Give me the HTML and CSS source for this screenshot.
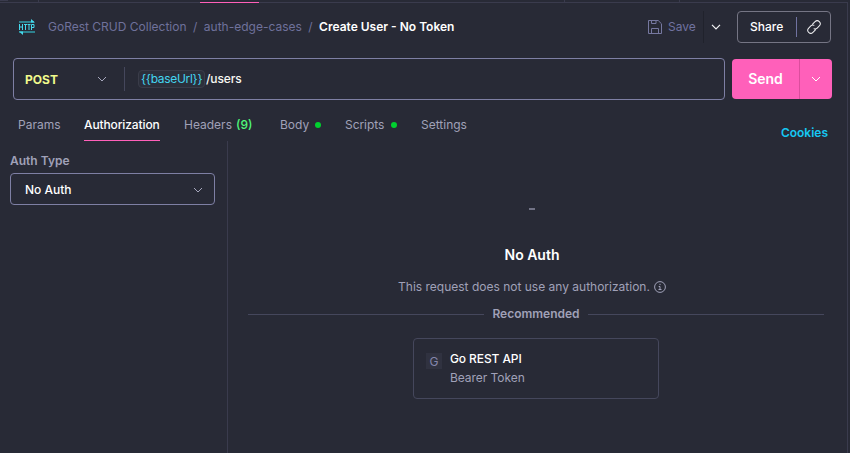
FILE: index.html
```html
<!DOCTYPE html>
<html lang="en">
<head>
<meta charset="utf-8">
<title>Create User - No Token</title>
<link rel="stylesheet" href="styles.css">
</head>
<body>
<div class="app">
  <div class="tabstrip"><i class="edge first"></i><i class="edge second"></i><i class="active"></i><i class="edge third"></i><i class="edge fourth"></i></div>
  <main class="main">
    <header class="header">
      <svg class="http" width="18" height="16" viewBox="0 0 18 16"><path d="M1 3h15M1 13h16" stroke="#2e818e" stroke-width="2"/><path d="M13 0l4 3.500h-4zM5 16l-4-3.500h4z" fill="#45d9ec"/><path d="M1.500 5v6M4.500 5v6M1.500 8h3M6 5.500h3M7.500 5.500V11M9.500 5.500h3M11 5.500V11M13.500 11V5.500h2.500v3h-2.500" fill="none" stroke="#45d9ec" stroke-width="1"/></svg>
      <nav class="crumbs"><span class="c1">GoRest CRUD Collection</span><span class="sep">/</span><span class="c2">auth-edge-cases</span><span class="sep">/</span><b class="c3">Create User - No Token</b></nav>
      <div class="save"><svg width="16" height="16" viewBox="0 0 16 16"><path d="M1.500 1.500h9.700l3.300 3.300v9.700h-13zM4.500 1.500v3h4.500v-3M4.500 14.500v-5h7v5" fill="none" stroke="#7678a0"/></svg><span>Save</span></div>
      <button class="more"><svg width="10" height="6" viewBox="0 0 10 6"><path d="M1 .8l4 4 4-4" fill="none" stroke="#f4f4f6" stroke-width="1.200"/></svg></button>
      <div class="share"><span>Share</span><i></i><svg width="16" height="16" viewBox="0 0 16 16"><g transform="rotate(-45 8 8)" fill="none" stroke="#f0f0f2" stroke-linecap="round"><path d="M7 11H3.500a3 3 0 0 1 0-6H6.500a3 3 0 0 1 2.700 1.700M9 5h3.500a3 3 0 0 1 0 6H9.500a3 3 0 0 1-2.700-1.700"/></g></svg></div>
    </header>
    <section class="request">
      <div class="urlbar"><b class="method">POST</b><svg width="10" height="6" viewBox="0 0 10 6"><path d="M1 1l4 4 4-4" fill="none" stroke="#a6a7bd"/></svg><i></i><span class="var">{{baseUrl}}</span><span class="path">/users</span></div>
      <div class="send"><b>Send</b><span class="drop"><svg width="10" height="6" viewBox="0 0 10 6"><path d="M1 1l4 4 4-4" fill="none" stroke="#fff"/></svg></span></div>
    </section>
    <nav class="tabs">
      <span class="t1">Params</span><span class="t2">Authorization</span><span class="t3">Headers <em>(9)</em></span><span class="t4">Body<i></i></span><span class="t5">Scripts<i></i></span><span class="t6">Settings</span><b class="cookies">Cookies</b>
    </nav>
    <section class="content">
      <aside class="side"><b class="label">Auth Type</b><div class="select"><span>No Auth</span><svg width="10" height="6" viewBox="0 0 10 6"><path d="M1 1l4 4 4-4" fill="none" stroke="#a6a7bd"/></svg></div></aside>
      <div class="panel">
        <i class="dash"></i>
        <h1>No Auth</h1>
        <p><span>This request does not use any authorization.</span><svg width="12" height="12" viewBox="0 0 12 12"><circle cx="6" cy="6" r="5.400" fill="none" stroke="#a0a1b8"/><path d="M6 2.800v1.300M4.700 5.500H6V8.500M4.500 8.500h3" fill="none" stroke="#a0a1b8"/></svg></p>
        <div class="divider"><b>Recommended</b></div>
        <div class="card"><span class="avatar">G</span><div><div class="name">Go REST API</div><div class="kind">Bearer Token</div></div></div>
      </div>
    </section>
  </main>
</div>
</body>
</html>
```
FILE: styles.css
```css
* { box-sizing: border-box; }
body { margin: 0; background: #282a36; color: #f8f8f2; font: 12px/16px Inter, "Liberation Sans", sans-serif; }
i, em { font-style: normal; }
svg { display: block; flex: none; }
span, b { white-space: nowrap; }
.app { width: 850px; height: 453px; overflow: hidden; display: flex; flex-direction: column; }
.tabstrip { height: 3px; flex: none; display: flex; border-bottom: 1px solid #3a3b4d; width: 848px; }
.edge { width: 1px; height: 2px; background: #3a3b4d; }
.first { width: 8px; height: 1px; }
.second { margin-left: 30px; }
.active { width: 59px; height: 3px; margin-left: 161px; border-bottom: 1px solid #ff5fb9; }
.third { margin-left: 305px; }
.fourth { margin-left: 114px; }
.main { width: 848px; flex: 1; border-right: 1px solid #3a3b4d; display: flex; flex-direction: column; }
.header { height: 48px; display: flex; align-items: center; padding: 0 16px 0 18px; flex: none; }
.crumbs { display: flex; margin-left: 12px; color: #6f719b; flex: 1; }
.sep { width: 17.300px; text-align: center; }
.c3 { color: #fff; font-weight: 600; }
.save { display: flex; align-items: center; gap: 5px; color: #7072a0; height: 32px; width: 57px; border-right: 1px solid #20222c; }
.more { width: 24px; padding: 0; border: 0; background: none; display: flex; justify-content: center; }
.share { width: 94px; height: 32px; margin-left: 9px; border: 1px solid #757584; border-radius: 4px; display: flex; align-items: center; padding-left: 12px; color: #fff; font-weight: 500; }
.share span { width: 46px; }
.share i { width: 1px; height: 20px; background: #7072a0; margin-right: 9px; }
.request { display: flex; gap: 7px; padding-left: 13px; margin-top: 7px; height: 42px; align-items: center; flex: none; }
.urlbar { width: 712px; height: 42px; border: 1px solid #7e7fa4; border-radius: 4px; display: flex; align-items: center; padding-left: 11px; }
.method { width: 72px; color: #f1fa8c; font-weight: 700; padding-top: 1px; }
.urlbar i { width: 1px; height: 24px; background: #45475c; margin: 0 13px 0 17px; }
.var { color: #43d5f0; background: #2c2f3b; border: 1px solid #3a3c49; border-radius: 4px; height: 18px; width: 67px; padding: 0 2px; letter-spacing: -.3px; }
.path { margin-left: 1px; font-weight: 500; letter-spacing: -.1px; }
.send { width: 100px; height: 40px; background: #ff60ba; color: #fff; border-radius: 4px; display: flex; align-items: center; font-size: 14px; }
.send b { width: 67px; text-align: center; font-weight: 600; }
.drop { width: 33px; height: 40px; border-left: 1px solid #dc4d9d; display: flex; justify-content: center; align-items: center; }
.tabs { display: flex; height: 41px; padding: 9px 19px 0 18px; color: #a0a1b8; flex: none; }
.tabs > span { height: 32px; line-height: 32px; margin-right: 24px; display: flex; align-items: center; }
.tabs .t1 { width: 42px; }
.tabs .t2 { width: 76px; color: #fff; font-weight: 500; letter-spacing: -.12px; border-bottom: 1px solid #ff60ba; }
.tabs .t3 { width: 72px; }
.tabs .t4 { width: 41px; }
.tabs .t5 { width: 52px; letter-spacing: -.05px; }
.tabs em { color: #50fa7b; margin-left: 4px; font-weight: 500; }
.tabs i { width: 6px; height: 6px; border-radius: 50%; background: #00d02f; margin-left: auto; }
.tabs .cookies { margin-left: auto; color: #16c7f3; font-weight: 600; line-height: 16px; margin-top: 16px; }
.content { flex: 1; display: flex; min-height: 0; }
.side { width: 228px; border-right: 1px solid #3a3b4d; padding: 12px 0 0 10px; }
.label { display: block; color: #a0a1b8; font-weight: 600; }
.select { width: 205px; height: 32px; margin-top: 4px; border: 1px solid #7e7fa4; border-radius: 4px; display: flex; align-items: center; justify-content: space-between; padding: 1px 11px 0 14px; color: #fff; font-weight: 500; }
.panel { flex: 1; padding: 67px 23px 0 20px; display: flex; flex-direction: column; align-items: center; }
.dash { width: 6px; height: 2px; background: #727386; margin-left: -8px; }
h1 { margin: 35px 0 0 -8px; font-size: 14px; line-height: 20px; font-weight: 600; color: #fff; }
p { margin: 14px 0 0 -8px; display: flex; gap: 4px; align-items: center; height: 16px; color: #a0a1b8; }
.divider { width: 576px; margin-top: 11px; display: flex; align-items: center; gap: 8px; color: #a0a1b8; }
.divider b { font-weight: 600; }
.divider::before, .divider::after { content: ""; height: 1px; background: #45475c; flex: 1; }
.card { width: 246px; height: 61px; margin-top: 16px; border: 1px solid #45475c; border-radius: 4px; display: flex; padding: 11px 12px; color: #fff; }
.avatar { width: 16px; height: 16px; margin: 3px 8px 0 0; background: #303240; color: #8586ac; text-align: center; line-height: 17px; }
.name { font-weight: 500; line-height: 18px; letter-spacing: -.1px; }
.kind { color: #a0a1b8; line-height: 20px; letter-spacing: -.05px; }
```
